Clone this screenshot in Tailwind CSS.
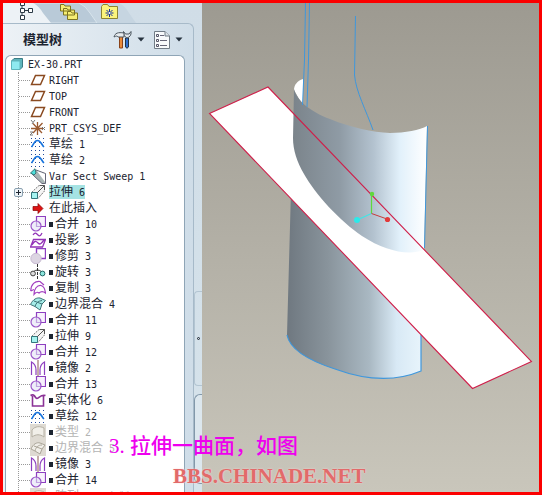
<!DOCTYPE html>
<html lang="zh-CN">
<head>
    <meta charset="UTF-8">
    <meta name="viewport" content="width=device-width, initial-scale=1.0">
    <title>EX-30.PRT</title>
    <script src="https://cdn.jsdelivr.net/npm/@tailwindcss/browser@4"></script>
</head>
<body class="font-['DejaVu_Sans_Mono','Noto_Sans_CJK_SC',monospace] text-[#1c2430]">
    <!-- icon sprites -->
    <svg class="hidden">
        <symbol id="plane" viewBox="0 0 16 16"><path d="M5.5 3.5H14.5L10.5 12.5H1.5Z" fill="#fff" stroke="#8a4a20" stroke-width="1.5"/></symbol>
        <symbol id="csys" viewBox="0 0 16 16"><path d="M1 8.5H13M7.5 2V15M3 3.5L12 13M12.5 3L3 13" stroke="#9a5a30" stroke-width="1.3" fill="none"/><path d="M1 0L3 2.5L5 0M3 2.5L2 4M12 7L15 10M15 7L12 10M0 12H3L0 15H3" stroke="#777" fill="none"/></symbol>
        <symbol id="sketch" viewBox="0 0 16 16"><path d="M1 2.5H16M1 6.5H16M1 10.5H16M1 14.5H16" stroke="#234a9c" stroke-dasharray="1 3" fill="none"/><path d="M1.5 11C3.5 9 4 4.5 7.5 4.5S11.5 9 14 11" stroke="#1673dd" stroke-width="1.6" fill="none"/></symbol>
        <symbol id="sweep" viewBox="0 0 16 16"><path d="M2 6L6 2L15.5 5.5V15.5H12Z" fill="#a9b5b5" stroke="#667"/><path d="M7 3L15 6V14Z" fill="#fff"/><path d="M.5 5L5 .8L6 5L4 7Z" fill="#4fe0dc" stroke="#377"/></symbol>
        <symbol id="extrude" viewBox="0 0 16 16"><path d="M1.5 8.5L9 1.5H14.5V7L8 14.5" fill="#f4f4f4" stroke="#777" stroke-dasharray="2 1"/><path d="M1.5 8.5H7.5V14.5H1.5Z" fill="#a5f3f0" stroke="#33777c"/><path d="M7 9L14 2M10 1.5H14.5V6" stroke="#555" fill="none"/></symbol>
        <symbol id="insert" viewBox="0 0 16 16"><path d="M3 6.5H8V3.5L13 8.5L8 13.5V10.5H3Z" fill="#dc1414" stroke="#8b0000" stroke-width=".7"/></symbol>
        <symbol id="merge" viewBox="0 0 16 16"><path d="M6.5 .5H15.5V10.500H6.5Z" fill="#f7f1fc" stroke="#8d3fc0" stroke-width="1.2"/><circle cx="6" cy="10" r="5" fill="#e3e3f5" fill-opacity=".6" stroke="#9a55c8" stroke-width="1.2"/></symbol>
        <symbol id="project" viewBox="0 0 16 16"><path d="M3 3C5 0 6 1 8 3S11 3 12 1M3.5 7.5H15.5L12.5 15H.5ZM2 13C5 8 6 9 8 11S11 12 14 8" fill="none" stroke="#9333b8" stroke-width="1.3"/></symbol>
        <symbol id="trim" viewBox="0 0 16 16"><path d="M6.5 .5H15.5V10.5H6.5Z" fill="#fff" stroke="#8d3fc0" stroke-width="1.4"/><circle cx="6" cy="10.5" r="5.2" fill="#dcd5e2" stroke="#c6b9d0"/></symbol>
        <symbol id="revolve" viewBox="0 0 16 16"><path d="M7.5 0V16" stroke="#333" stroke-dasharray="3 1"/><path d="M3 8Q7.500 4 12 8" stroke="#333" fill="none"/><circle cx="3" cy="9.5" r="2.4" fill="#ddd" stroke="#444"/><circle cx="12.5" cy="9.5" r="2.4" fill="#8be5dc" stroke="#266"/></symbol>
        <symbol id="copy" viewBox="0 0 16 16"><path d="M.7 11C1 4 5 1 10 1.500L14 5M.7 11L4 9.500" fill="none" stroke="#a23fc0" stroke-width="1.2"/><path d="M4 14.5C4 9 7 5 11 5.5C14 6 15 9 15.5 13C13 11 11 11 9 13C7 11.5 6 12 4 14.5Z" fill="#fff" stroke="#a23fc0" stroke-width="1.2"/></symbol>
        <symbol id="blend" viewBox="0 0 16 16"><path d="M.5 8.5C3 3 7 1.5 10 2L15.5 4.500L12 8L10 14L5 10.5Z" fill="#a5ece8" stroke="#3d7377"/><path d="M5 10.5C6 7 8 5 12 4.5M4 5L12 8" stroke="#3d7377" fill="none"/></symbol>
        <symbol id="mirror" viewBox="0 0 16 16"><path d="M8 0V16" stroke="#8b5a55"/><path d="M1.500 15V2C5 4 6 7 6 10V15M14.500 15V2C11 4 10 7 10 10V15" fill="#fff" stroke="#8d3fc0" stroke-width="1.2"/></symbol>
        <symbol id="solid" viewBox="0 0 16 16"><path d="M.5 3.5C3 2 4 3 6 6C8 8 10 2 15.500 3.5M2.5 4V14H13.5V4" fill="none" stroke="#8b3296" stroke-width="1.6"/></symbol>
        <symbol id="style" viewBox="0 0 16 16"><path d="M0 0H16V16H0Z" fill="#dedad2"/><path d="M2 13V6C5 2 10 2 14 4V13C10 10 6 10 2 13Z" fill="#f1efe9" stroke="#b5b0a4"/></symbol>
        <symbol id="blendoff" viewBox="0 0 16 16"><path d="M0 0H16V16H0Z" fill="#dedad2"/><path d="M1 9C3 4 7 2 10 3L15 5L12 9L10 14L5 11ZM5 11C6 7 8 5 12 5M4 6L12 9" fill="#f1efe9" stroke="#aaa598"/></symbol>
        <symbol id="caret" viewBox="0 0 8 5"><path d="M.5 .5H7.5L4 4.5Z" fill="#27333f"/></symbol>
    </svg>

    <div class="relative flex h-screen overflow-hidden border-[3px] border-[#fb0000] bg-[#d3e0ea]">
        <!-- model tree pane -->
        <aside class="flex w-[199px] shrink-0 bg-linear-to-b from-[#d0dde7] to-[#d6e3eb]">
            <div class="flex min-w-0 flex-1 flex-col">
                <nav class="relative flex h-5 shrink-0 gap-[23px] pl-4">
                    <svg class="absolute left-0 top-0 h-5 w-[140px]" viewBox="0 0 140 20">
                        <path d="M75 0H116Q122 3 126 10L133 20H80Z" fill="#c6d5e1"/>
                        <path d="M30 0H76Q83 3 87 10L94 20H40Z" fill="#b9cad8" stroke="#d8e4ec"/>
                        <path d="M0 0H30Q36 3 40 10L48 20H0Z" fill="#edf2f6"/>
                    </svg>
                    <button class="relative h-[18px] w-[18px]" aria-label="模型树">
                        <svg viewBox="0 0 18 18" fill="#fff" stroke="#2b3a46"><path d="M3 2V15M3 7.5H12" fill="none"/><path d="M1.5-1.5H5.5V2.5H1.5ZM1.5 5.5H5.5V9.5H1.5ZM1.5 12.5H5.5V16.5H1.5ZM9.5 5.5H13.5V9.5H9.5Z"/></svg>
                    </button>
                    <button class="relative h-[18px] w-[18px]" aria-label="文件夹浏览器">
                        <svg viewBox="0 0 18 18" fill="#f6ee72" stroke="#7d7420"><path d="M.5 8V1.5H4L5 3H10.5V8ZM3.5 12V5.5H7L8 7H14.5V12ZM7.5 16.5V8.5H11L12 10H17.5V16.5Z"/></svg>
                    </button>
                    <button class="relative h-[18px] w-[18px]" aria-label="收藏夹">
                        <svg viewBox="0 0 18 18"><path d="M.5 15.5V3.5L2 1.5H6.5L8 3.5H16.5V15.5Z" fill="#fbf47c" stroke="#8d8430"/><path d="M8.500 6V14M4.500 10H12.500M5.500 7L11.500 13M11.500 7L5.500 13" stroke="#17329c"/><circle cx="8.500" cy="10" r="1" fill="#fff"/></svg>
                    </button>
                </nav>

                <div class="flex min-h-0 flex-1 flex-col rounded-tr-md border-r border-t border-[#a7bac9] bg-linear-to-r from-[#edf2f6] to-[#cfdde8]">
                    <header class="flex h-[31px] shrink-0 items-center pl-5">
                        <h1 class="w-[90px] text-[13px] font-bold leading-4">模型树</h1>
                        <button class="flex items-center gap-1" aria-label="设置">
                            <svg class="h-5 w-5" viewBox="0 0 20 20"><path d="M12.5 8H15.5V17Q14 19.5 12.5 17Z" fill="#2d6fd0" stroke="#234"/><path d="M10.5 1.5C10 5 12 7 14 8C17 7 18.5 5 18 1.5L16 4H12.5Z" fill="#dfe5ea" stroke="#4a555e"/><path d="M6.5 6H9.5V18H6.5Z" fill="#e98a3a" stroke="#8a4218"/><path d="M1 7C2 3 5 2 11 3V7H5C4 5.5 3 6 1 7Z" fill="#e7ebee" stroke="#4a555e"/></svg>
                            <svg class="h-[5px] w-2"><use href="#caret"/></svg>
                        </button>
                        <button class="ml-2 flex items-center gap-1" aria-label="显示">
                            <svg class="h-5 w-[18px]" viewBox="0 0 18 20"><path d="M1.5 1.5H12L16.5 6V18.5H1.5Z" fill="#f8fafb" stroke="#717c86"/><path d="M12 1.5V6H16.5" fill="#dde4e9" stroke="#717c86"/><path d="M7 5.5H11M7 10.5H14M7 15.5H14" stroke="#667"/><path d="M3.5 4.5H5.5V6.5H3.5ZM3.5 9.5H5.5V11.5H3.5ZM3.5 14.5H5.5V16.5H3.5Z" fill="none" stroke="#556"/></svg>
                            <svg class="h-[5px] w-2"><use href="#caret"/></svg>
                        </button>
                    </header>
                    <div class="ml-0.5 mr-2 min-h-0 flex-1 overflow-hidden rounded-t-md border border-b-0 border-[#8fa5b6] bg-white">
                        <div class="flex h-4 items-center gap-1 pl-1 text-[10px]">
                            <svg class="h-[14px] w-[14px]" viewBox="0 0 14 14"><path d="M1.5 4L4 1.5H12.5V10L10 12.5" fill="#5fb5bc" stroke="#3b7c85"/><path d="M1.5 4H10V12.5H1.5Z" fill="#8eeaf0" stroke="#5fb5bc"/></svg>
                            EX-30.PRT
                        </div>
                        <ul id="tree" class="ml-3 border-l border-dotted border-[#999]"></ul>
                    </div>
                </div>
            </div>
            <!-- splitter -->
            <div class="flex w-2 shrink-0 flex-col">
                <div class="h-[288px] shrink-0"></div>
                <div class="flex h-[95px] shrink-0 items-center justify-center rounded-l border border-r-0 border-[#b3c5d2]">
                    <span class="h-[3px] w-[3px] rounded-full border border-[#1c2430]"></span>
                </div>
                <div class="mt-2 h-[90px] shrink-0 rounded-l-md border border-r-0 border-[#8298aa] bg-[#dce7ee]"></div>
            </div>
        </aside>

        <!-- 3D viewport -->
        <main class="min-w-0 flex-1 bg-linear-to-b from-[#9d9a91] to-[#c9c6bb]">
            <svg class="h-full w-full" viewBox="202 3 337 489">
                <defs>
                    <linearGradient id="upper" gradientUnits="userSpaceOnUse" x1="293" y1="0" x2="427" y2="0">
                        <stop offset="0" stop-color="#7b848b"/><stop offset=".35" stop-color="#8f9ba5"/><stop offset=".6" stop-color="#b3c2cf"/><stop offset=".8" stop-color="#e2f1fb"/><stop offset="1" stop-color="#fff"/>
                    </linearGradient>
                    <linearGradient id="lower" gradientUnits="userSpaceOnUse" x1="287" y1="0" x2="424" y2="0">
                        <stop offset="0" stop-color="#6f7880"/><stop offset=".3" stop-color="#89949c"/><stop offset=".6" stop-color="#a9b8c2"/><stop offset=".8" stop-color="#d8e9f5"/><stop offset="1" stop-color="#e9f5fc"/>
                    </linearGradient>
                </defs>
                <path d="M291 190L287 335C290 350 310 361 335 369C365 380 395 382 421 371V330Z" fill="url(#lower)"/>
                <path d="M287 335C290 350 310 361 335 369C365 380 395 382 421 371V335" fill="none" stroke="#3f97dc" stroke-width="1.2"/>
                <path d="M209.5 113.5L268 87L531.5 361.5L472.5 388.5Z" fill="#fff"/>
                <path d="M303 79C297 81 294 85 294 90L303 106Z" fill="#fff"/>
                <path d="M294 89C297 101 311 112 330 119C352 128 372 132 390 133C405 133 420 130 427 126L424 250C408 256 385 251 362 236C340 221 315 194 304 174C297 162 293 150 293 138Z" fill="url(#upper)"/>
                <g fill="none" stroke="#3f97dc">
                    <path d="M305.5 3L304.5 60L302.5 105M309.5 3L308.5 60L307 107M355.5 16L354.5 75C356 92 366 110 373 130M427.5 126L424.5 248"/>
                </g>
                <path d="M209.5 113.5L268 87L531.5 361.5L472.5 388.5Z" fill="none" stroke="#cf1f4a" stroke-width="1.1"/>
                <path d="M371.5 213.5V194" stroke="#5fd93c" stroke-width="1.2"/>
                <path d="M371.5 213.5L357 220" stroke="#3fe6e6" stroke-width="1.2"/>
                <path d="M371.5 213.5L387 219" stroke="#c83a3a"/>
                <circle cx="372" cy="194" r="2.2" fill="#5fd93c"/>
                <circle cx="357" cy="220" r="3" fill="#2beaea"/>
                <circle cx="387.5" cy="219.5" r="2.6" fill="#e23a3a"/>
            </svg>
        </main>

        <!-- step caption and watermark, laid over both panes -->
        <p class="absolute bottom-[34px] left-[106px] whitespace-nowrap font-['Liberation_Serif','Noto_Sans_CJK_SC',serif] text-[21px] font-medium leading-6 text-[#ee00ee]">3. 拉伸一曲面，如图</p>
        <p class="absolute bottom-1 left-[170px] whitespace-nowrap font-['Liberation_Serif',serif] text-[21px] font-bold leading-6 text-[#e26a6a] [text-shadow:0_0_2px_#f8d8d4]">BBS.CHINADE.NET</p>
    </div>

    <script>
        // [icon, name, number, flags]  m = marker square, s = selected, g = suppressed
        const rows = [
            ['plane', 'RIGHT', '', ''], ['plane', 'TOP', '', ''], ['plane', 'FRONT', '', ''],
            ['csys', 'PRT_CSYS_DEF', '', ''],
            ['sketch', '草绘', '1', ''], ['sketch', '草绘', '2', ''],
            ['sweep', 'Var Sect Sweep', '1', ''],
            ['extrude', '拉伸', '6', 's'],
            ['insert', '在此插入', '', ''],
            ['merge', '合并', '10', 'm'], ['project', '投影', '3', 'm'], ['trim', '修剪', '3', 'm'],
            ['revolve', '旋转', '3', 'm'], ['copy', '复制', '3', 'm'], ['blend', '边界混合', '4', 'm'],
            ['merge', '合并', '11', 'm'], ['extrude', '拉伸', '9', 'm'], ['merge', '合并', '12', 'm'],
            ['mirror', '镜像', '2', 'm'], ['merge', '合并', '13', 'm'], ['solid', '实体化', '6', 'm'],
            ['sketch', '草绘', '12', 'm'],
            ['style', '类型', '2', 'mg'], ['blendoff', '边界混合', '5', 'mg'],
            ['mirror', '镜像', '3', 'm'], ['merge', '合并', '14', 'm'],
            ['style', '阵列', '1 / 复制', 'mg']
        ];
        document.getElementById('tree').innerHTML = rows.map(([icon, name, num, flags]) => {
            const size = /^[A-Z]/.test(name) ? 'text-[10px]' : 'text-[12px]';
            const tone = flags.includes('g') ? 'text-[#b4b4b4]' : '';
            const pick = flags.includes('s') ? 'bg-[#a5e3e3]' : '';
            const plus = flags.includes('s')
                ? '<button class="absolute -left-[5px] top-1 flex h-[9px] w-[9px] items-center justify-center rounded-xs border border-[#8aa0b0] bg-[#eef4f8]" aria-label="展开"><svg class="h-[5px] w-[5px]" viewBox="0 0 5 5"><path d="M0 2.5H5M2.5 0V5" stroke="#1c2430"/></svg></button>' : '';
            const mark = flags.includes('m') ? '<span class="mr-0.5 h-[5px] w-1 bg-[#1c2430]"></span>' : '';
            return `<li class="relative flex h-4 items-center whitespace-nowrap">${plus}
                <span class="w-[11px] border-t border-dotted border-[#999]"></span>
                <svg class="mr-[3px] h-4 w-4"><use href="#${icon}"/></svg>${mark}
                <span class="flex h-[14px] items-center gap-1.5 ${tone} ${pick}"><span class="${size}">${name}</span>${num ? `<span class="text-[10px]">${num}</span>` : ''}</span>
            </li>`;
        }).join('');
    </script>
</body>
</html>
